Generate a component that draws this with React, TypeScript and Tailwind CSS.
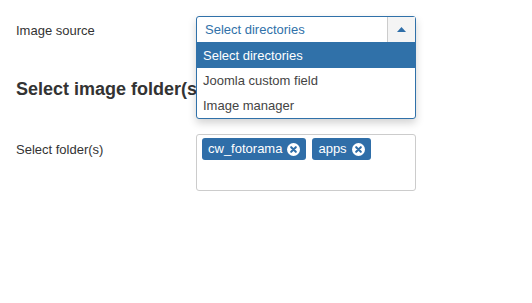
import React from 'react';

const tags = ['cw_fotorama', 'apps'];
const options = ['Select directories', 'Joomla custom field', 'Image manager'];

function CloseCircle() {
  return (
    <svg width="13" height="13" viewBox="0 0 14 14" className="ml-[5px]">
      <circle cx="7" cy="7" r="7" fill="#ffffff" />
      <path d="M4.5 4.5 L9.5 9.5 M9.5 4.5 L4.5 9.5" stroke="#2f6ea8" strokeWidth="2.2" strokeLinecap="round" />
    </svg>
  );
}

export default function App() {
  return (
    <div className="w-[532px] h-[303px] bg-white text-[#333] font-['Liberation_Sans',Arial,sans-serif] text-[13px] relative">
      <div className="pt-4 pl-4">
        <div className="flex items-start">
          <div className="w-[180px] pt-[5px]">Image source</div>
          <div className="relative w-[220px] h-[27px]">
            <div className="absolute left-0 top-0 w-[220px] bg-white border border-[#3071a9] rounded-[3px] shadow-[0_4px_8px_rgba(0,0,0,0.18)] z-10">
              <div className="flex h-[26px] border-b border-[#3071a9]">
                <div className="flex-1 pl-2 flex items-center pt-[1px] text-[#3071a9]">Select directories</div>
                <div className="w-[28px] bg-[#f4f4f4] border-l border-[#ccc] flex items-center justify-center">
                  <svg width="9" height="5" viewBox="0 0 9 5">
                    <path d="M0 5 L4.5 0 L9 5 Z" fill="#2f6ea8" />
                  </svg>
                </div>
              </div>
              <div>
                {options.map((o, i) => (
                  <div
                    key={o}
                    className={
                      i === 0
                        ? 'h-[25px] pl-[6px] flex items-center bg-[#3071a9] text-white'
                        : 'h-[25px] pl-[6px] flex items-center text-[#444]'
                    }
                  >
                    {o}
                  </div>
                ))}
              </div>
            </div>
          </div>
        </div>

        <h2 className="mt-[37px] text-[18px] font-bold text-[#333] leading-none">Select image folder(s)</h2>

        <div className="flex items-start mt-[36px]">
          <div className="w-[180px] pt-[6px]">Select folder(s)</div>
          <div className="w-[220px] h-[57px] border border-[#ccc] rounded-[3px] p-[3px] pl-[5px] flex items-start gap-[6px]">
            {tags.map((t) => (
              <span
                key={t}
                className="h-[22px] px-[6px] bg-[#2f6ea8] text-white rounded-[3px] flex items-center text-[13px]"
              >
                {t}
                <CloseCircle />
              </span>
            ))}
          </div>
        </div>
      </div>
    </div>
  );
}
